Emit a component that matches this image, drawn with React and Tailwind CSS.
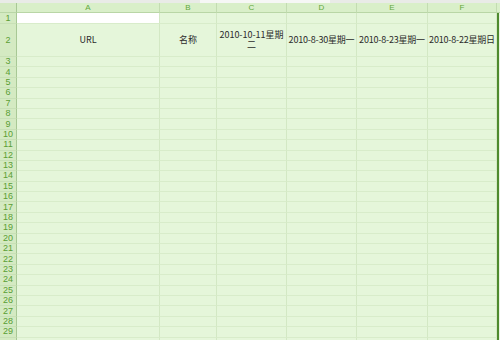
import React from "react";

const cols = [
  { k: "A", w: "w-[143px]" },
  { k: "B", w: "w-[57px]" },
  { k: "C", w: "w-[70px]" },
  { k: "D", w: "w-[70px]" },
  { k: "E", w: "w-[71px]" },
  { k: "F", w: "w-[69px]" },
];

const row2 = ["URL", "名称", "2010-10-11星期二", "2010-8-30星期一", "2010-8-23星期一", "2010-8-22星期日"];

function RowHead({ n, h }) {
  return (
    <div
      className={`w-[17px] shrink-0 ${h} bg-[#d4eac2] border-r border-r-[#a8c895] border-b border-b-[#c8e0b6] flex items-center justify-center text-[9px] leading-[9px] text-[#5a9e34]`}
      style={{ fontFamily: '"Liberation Sans", sans-serif' }}
    >
      {n}
    </div>
  );
}

function Edge() {
  return <div className="w-[3px] shrink-0 border-l-2 border-l-[#4e8a2e] bg-[#eaf3e2]" />;
}

export default function App() {
  const rows = [];
  for (let i = 3; i <= 29; i++) rows.push(i);
  return (
    <div
      className="w-[500px] h-[340px] overflow-hidden bg-[#e5f6da] flex flex-col"
      style={{ fontFamily: '"Noto Sans CJK SC", "Liberation Sans", sans-serif' }}
    >
      <div className="h-[3px] shrink-0 bg-[#eef0ec] flex">
        <div className="w-[200px] bg-[#e9ebe7]" />
        <div className="w-[130px] bg-[#f6f7f5]" />
        <div className="flex-1 bg-[#e9ebe7]" />
      </div>
      {/* column header */}
      <div className="flex h-[10px] shrink-0" style={{ fontFamily: '"Liberation Sans", sans-serif' }}>
        <div className="w-[17px] shrink-0 bg-[#d4eac2] border-r border-r-[#a8c895] border-b border-b-[#b9d6a6]" />
        {cols.map((c) => (
          <div
            key={c.k}
            className={`${c.w} shrink-0 bg-[#d9efc9] border-r border-r-[#c3dcb1] border-b border-b-[#b9d6a6] flex items-center justify-center text-[8px] leading-[8px] text-[#62a83a]`}
          >
            {c.k}
          </div>
        ))}
        <div className="flex-1 bg-[#d9efc9] border-b border-b-[#b9d6a6]" />
      </div>
      {/* row 1 */}
      <div className="flex h-[11px] shrink-0">
        <RowHead n={1} h="h-[11px]" />
        {cols.map((c, i) => (
          <div
            key={c.k}
            className={`${c.w} shrink-0 ${i === 0 ? "bg-white" : ""} border-r border-r-[#d3e8c4] border-b border-b-[#d8ecca]`}
          />
        ))}
        <Edge />
      </div>
      {/* row 2 */}
      <div className="flex h-[33px] shrink-0">
        <RowHead n={2} h="h-[33px]" />
        {cols.map((c, i) => (
          <div
            key={c.k}
            className={`${c.w} shrink-0 border-r border-r-[#d3e8c4] border-b border-b-[#d8ecca] flex items-center justify-center text-center text-[9px] leading-[10px] text-[#2b2b2b] ${i >= 3 ? "whitespace-nowrap tracking-[-0.2px]" : "px-[2px]"}`}
          >
            <span>{row2[i]}</span>
          </div>
        ))}
        <Edge />
      </div>
      {rows.map((n) => (
        <div key={n} className="flex h-[10.4px] shrink-0">
          <RowHead n={n} h="h-[10.4px]" />
          {cols.map((c) => (
            <div
              key={c.k}
              className={`${c.w} shrink-0 border-r border-r-[#d3e8c4] border-b border-b-[#d8ecca]`}
            />
          ))}
          <Edge />
        </div>
      ))}
      <div className="flex flex-1">
        <div className="w-[17px] shrink-0 bg-[#d4eac2] border-r border-r-[#a8c895]" />
        {cols.map((c) => (
          <div key={c.k} className={`${c.w} shrink-0 border-r border-r-[#d3e8c4]`} />
        ))}
        <Edge />
      </div>
    </div>
  );
}
